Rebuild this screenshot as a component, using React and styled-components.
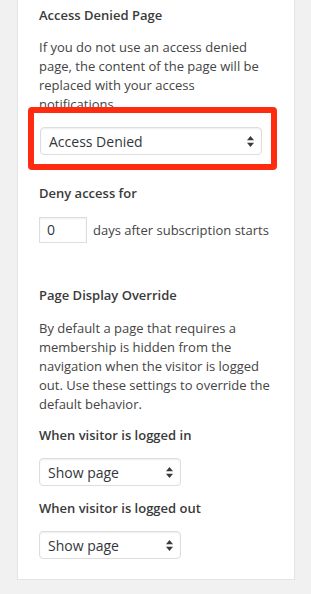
import styled, { createGlobalStyle } from "styled-components";

const GlobalStyle = createGlobalStyle`
  html, body {
    margin: 0;
    padding: 0;
    background: #f1f1f1;
  }
  body {
    font-family: "Open Sans", "Liberation Sans", sans-serif;
    color: #444;
  }
`;

const Panel = styled.div`
  margin: 0 16px 0 17px;
  background: #fff;
  border: 1px solid #e5e5e5;
  border-top: none;
  box-shadow: 0 1px 1px rgba(0, 0, 0, 0.04);
  padding: 6px 23px 20px 21px;
`;

const Heading = styled.h4`
  margin: ${({ $top }) => $top || 0}px 0 0;
  font-size: 13px;
  line-height: 19px;
  font-weight: 600;
  color: #3a3a3a;
`;

const Text = styled.p`
  margin: ${({ $top }) => $top || 0}px 0 0;
  font-size: 13px;
  line-height: 19px;
  color: #444;
`;

const Highlight = styled.div`
  position: relative;
  margin: -7px -6px 0 -11px;
  border: 6px solid #ff2a0f;
  border-radius: 4px;
  background: #fff;
  padding: 14px 9px 9px 6px;
`;

const Select = styled.div`
  display: flex;
  align-items: center;
  justify-content: space-between;
  box-sizing: border-box;
  width: ${({ $width }) => ($width ? `${$width}px` : "100%")};
  height: 28px;
  margin-top: ${({ $top }) => $top || 0}px;
  padding: 0 7px 0 8px;
  border: 1px solid #ddd;
  border-radius: 4px;
  box-shadow: inset 0 1px 2px rgba(0, 0, 0, 0.07);
  background: #fff;
  font-size: 14px;
  color: #32373c;
`;

const InputRow = styled.div`
  display: flex;
  align-items: center;
  gap: 6px;
  margin-top: 14px;
  font-size: 13px;
  color: #444;
`;

const NumberBox = styled.div`
  box-sizing: border-box;
  width: 48px;
  height: 26px;
  padding: 0 7px;
  border: 1px solid #ddd;
  box-shadow: inset 0 1px 2px rgba(0, 0, 0, 0.07);
  font-size: 14px;
  line-height: 24px;
  color: #32373c;
`;

const Arrows = () => (
  <svg width="7" height="11" viewBox="0 0 7 11">
    <path d="M3.5 0 L7 4.3 L0 4.3 Z" fill="#3a3a3a" />
    <path d="M0 6.7 L7 6.7 L3.5 11 Z" fill="#3a3a3a" />
  </svg>
);

export default function App() {
  return (
    <>
      <GlobalStyle />
      <Panel>
        <Heading>Access Denied Page</Heading>
        <Text $top={13}>
          If you do not use an access denied page, the content of the page will be
          replaced with your access notifications
        </Text>
        <Highlight>
          <Select>
            <span>Access Denied</span>
            <Arrows />
          </Select>
        </Highlight>

        <Heading $top={14}>Deny access for</Heading>
        <InputRow>
          <NumberBox>0</NumberBox>
          <span>days after subscription starts</span>
        </InputRow>

        <Heading $top={43}>Page Display Override</Heading>
        <Text $top={14}>
          By default a page that requires a membership is hidden from the navigation
          when the visitor is logged out. Use these settings to override the default
          behavior.
        </Text>

        <Heading $top={12}>When visitor is logged in</Heading>
        <Select $width={142} $top={13}>
          <span>Show page</span>
          <Arrows />
        </Select>

        <Heading $top={13}>When visitor is logged out</Heading>
        <Select $width={142} $top={13}>
          <span>Show page</span>
          <Arrows />
        </Select>
      </Panel>
    </>
  );
}
